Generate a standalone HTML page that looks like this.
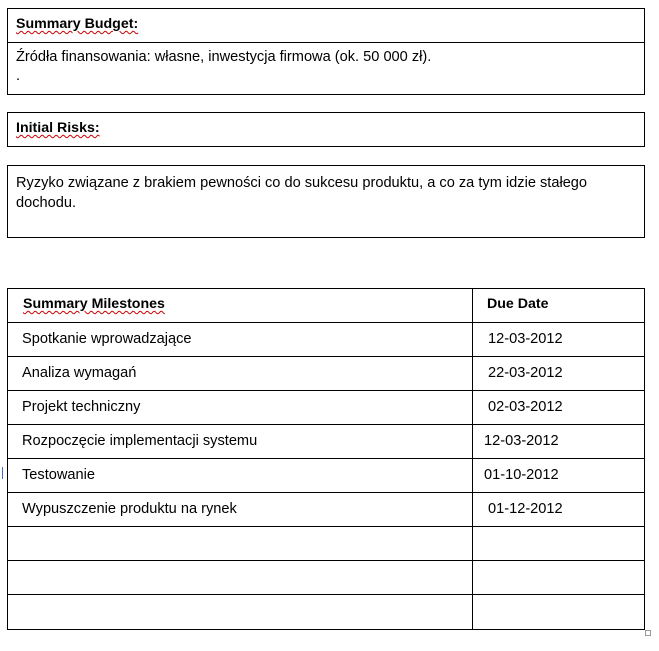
<!DOCTYPE html>
<html><head><style>
body{margin:0;width:659px;height:651px;background:#fff;position:relative;font-family:"Liberation Sans",Arial,sans-serif;font-size:14.6px;color:#000;overflow:hidden}
.a{position:absolute;white-space:nowrap}
.b{position:absolute;border:1px solid #000;box-sizing:border-box}
.h{position:absolute;left:0;height:1px;background:#000}
.v{position:absolute;width:1px;background:#000}
.sq{text-decoration:underline wavy #c00;text-decoration-thickness:1px;text-underline-offset:2px;font-weight:bold;font-size:14.2px}
</style></head><body>
<div class="b" style="left:7px;top:8px;width:638px;height:87px"></div>
<div class="h" style="left:7px;width:638px;top:42px"></div>
<div class="a sq" style="left:16px;top:16px">Summary Budget:</div>
<div class="a" style="left:16px;top:49px">Źródła finansowania: własne, inwestycja firmowa (ok. 50 000 zł).</div>
<div class="a" style="left:16px;top:68px">.</div>
<div class="b" style="left:7px;top:112px;width:638px;height:35px"></div>
<div class="a sq" style="left:16px;top:120px">Initial Risks:</div>
<div class="b" style="left:7px;top:165px;width:638px;height:73px"></div>
<div class="a" style="left:16px;top:173px;line-height:20px">Ryzyko związane z brakiem pewności co do sukcesu produktu, a co za tym idzie stałego<br>dochodu.</div>
<div class="b" style="left:7px;top:288px;width:638px;height:342px"></div>
<div class="v" style="left:472px;top:288px;height:342px"></div>
<div class="h" style="left:7px;width:638px;top:322px"></div>
<div class="h" style="left:7px;width:638px;top:356px"></div>
<div class="h" style="left:7px;width:638px;top:390px"></div>
<div class="h" style="left:7px;width:638px;top:424px"></div>
<div class="h" style="left:7px;width:638px;top:458px"></div>
<div class="h" style="left:7px;width:638px;top:492px"></div>
<div class="h" style="left:7px;width:638px;top:526px"></div>
<div class="h" style="left:7px;width:638px;top:560px"></div>
<div class="h" style="left:7px;width:638px;top:594px"></div>
<div class="a sq" style="left:23px;top:296px">Summary Milestones</div>
<div class="a" style="left:487px;top:296px;font-weight:bold;font-size:14.2px">Due Date</div>
<div class="a" style="left:22px;top:331px">Spotkanie wprowadzające</div><div class="a" style="left:488px;top:331px">12-03-2012</div>
<div class="a" style="left:22px;top:365px">Analiza wymagań</div><div class="a" style="left:488px;top:365px">22-03-2012</div>
<div class="a" style="left:22px;top:399px">Projekt techniczny</div><div class="a" style="left:488px;top:399px">02-03-2012</div>
<div class="a" style="left:22px;top:433px">Rozpoczęcie implementacji systemu</div><div class="a" style="left:484px;top:433px">12-03-2012</div>
<div class="a" style="left:22px;top:467px">Testowanie</div><div class="a" style="left:484px;top:467px">01-10-2012</div>
<div class="a" style="left:22px;top:501px">Wypuszczenie produktu na rynek</div><div class="a" style="left:488px;top:501px">01-12-2012</div>
<div class="v" style="left:2px;top:467px;height:12px;background:#3a6fc4"></div>
<div class="b" style="left:645px;top:630px;width:6px;height:6px;border-color:#999"></div>
</body></html>
